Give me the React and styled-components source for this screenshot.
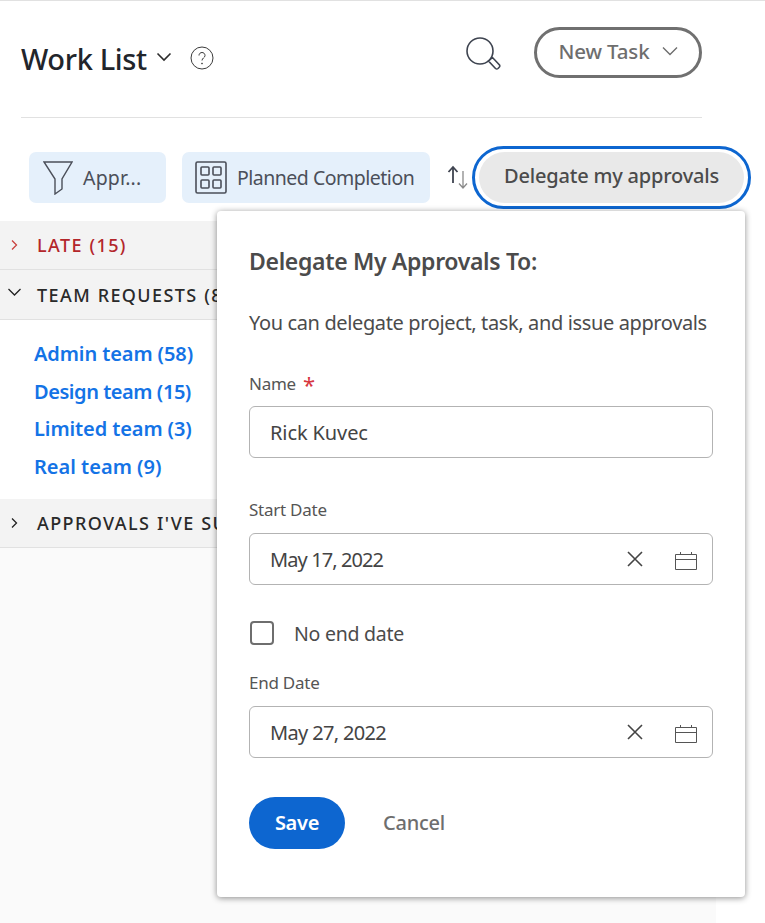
import React from "react";
import styled, { createGlobalStyle } from "styled-components";

const GlobalStyle = createGlobalStyle`
  html, body {
    margin: 0;
    padding: 0;
    background: #fff;
    font-family: "Noto Sans", "Open Sans", Arial, sans-serif;
  }
  * { box-sizing: border-box; }
`;

const Page = styled.div`
  position: relative;
  width: 765px;
  height: 923px;
  overflow: hidden;
  background: #fff;
  border-top: 1px solid #e1e1e1;
  display: flex;
  flex-direction: column;
`;

const Header = styled.header`
  height: 117px;
  margin: 0 63px 0 21px;
  border-bottom: 1px solid #e1e1e1;
  display: flex;
  align-items: flex-start;
  padding-top: 26px;
`;

const Title = styled.h1`
  margin: 13px 0 0;
  font-size: 29px;
  line-height: 38px;
  font-weight: 500;
  letter-spacing: -0.35px;
  color: #22252b;
`;

const TitleChevron = styled.svg`
  width: 16px;
  height: 10px;
  margin: 25px 0 0 9px;
  fill: none;
  stroke: #2c2c2c;
  stroke-width: 1.6;
`;

const HelpIcon = styled.svg`
  width: 24px;
  height: 24px;
  margin: 19px 0 0 18px;
  fill: none;
  stroke: #3c3c3c;
  stroke-width: 1;
`;

const SearchIcon = styled.svg`
  width: 36px;
  height: 36px;
  margin: 9px 0 0 auto;
  fill: none;
  stroke: #3e4450;
  stroke-width: 1.6;
`;

const NewTask = styled.button`
  width: 168px;
  height: 51px;
  margin-left: 33px;
  border: 3px solid #707070;
  border-radius: 26px;
  background: #fff;
  color: #6e6e6e;
  font: 500 20.5px "Noto Sans", sans-serif;
  letter-spacing: -0.15px;
  display: flex;
  align-items: center;
  justify-content: center;
  gap: 13px;
  padding: 0 0 4px 1px;
`;

const NewTaskChevron = styled.svg`
  width: 16px;
  height: 10px;
  fill: none;
  stroke: #6e6e6e;
  stroke-width: 1.4;
`;

const Toolbar = styled.div`
  height: 103px;
  padding: 34px 0 0 29px;
  display: flex;
  align-items: flex-start;
`;

const ToolChip = styled.div`
  height: 51px;
  width: ${(p) => p.$width}px;
  margin-right: ${(p) => p.$gap}px;
  flex: none;
  padding-left: ${(p) => p.$pad}px;
  border-radius: 7px;
  background: #e5f0fb;
  color: #4b4f59;
  font-size: 19.5px;
  letter-spacing: ${(p) => p.$spacing}px;
  display: flex;
  align-items: center;
  gap: 10px;
`;

const ChipIcon = styled.svg`
  flex: none;
  fill: none;
  stroke: #4b4f59;
`;

const SortIcon = styled.svg`
  flex: none;
  width: 24px;
  height: 26px;
  margin: 12px 3px 0 15px;
  fill: none;
  stroke-width: 1.3;
`;

const DelegateRing = styled.div`
  flex: none;
  width: 279px;
  height: 63px;
  margin-top: -6px;
  padding: 3px 4px;
  border: 3px solid #0d66d0;
  border-radius: 32px;
  background: #fff;
`;

const DelegateButton = styled.button`
  width: 100%;
  height: 100%;
  border: 0;
  border-radius: 27px;
  background: #e9e9e9;
  color: #4b4b4b;
  font: 500 20px "Noto Sans", sans-serif;
  letter-spacing: -0.2px;
  padding: 0 0 5px;
`;

const SectionRow = styled.div`
  width: 716px;
  height: ${(p) => p.$height}px;
  padding-left: 8px;
  background: #f3f3f3;
  border-bottom: 1px solid #e1e1e1;
  display: flex;
  align-items: center;
  color: ${(p) => p.$color};
  font-size: 18px;
  font-weight: 500;
  letter-spacing: 1.4px;
  word-spacing: 0.5px;
  white-space: pre;
`;

const RowChevron = styled.svg`
  flex: none;
  width: 29px;
  height: 14px;
  fill: none;
  stroke: ${(p) => p.$color};
  stroke-width: 1.3;
`;

const TeamList = styled.ul`
  width: 716px;
  height: 179px;
  margin: 0;
  padding: 15px 0 0 34px;
  list-style: none;
  background: #fff;
`;

const TeamLink = styled.li`
  height: 37.7px;
  line-height: 37px;
  color: #1473e6;
  font-size: 20px;
  font-weight: 600;
  letter-spacing: ${(p) => p.$spacing}px;
`;

const ListRest = styled.div`
  width: 716px;
  flex: 1;
  background: #fafafa;
`;

const Popover = styled.section`
  position: absolute;
  top: 210px;
  left: 217px;
  width: 528px;
  height: 686px;
  padding: 31px 32px 0;
  background: #fff;
  border-radius: 4px;
  box-shadow: 0 1px 6px rgba(0, 0, 0, 0.45);
  display: flex;
  flex-direction: column;
`;

const PopoverTitle = styled.h2`
  margin: 0;
  height: 38px;
  line-height: 38px;
  color: #4b4b4b;
  font-size: 23px;
  font-weight: 600;
  letter-spacing: -0.33px;
  white-space: nowrap;
`;

const Intro = styled.p`
  margin: 29px 0 0;
  height: 28px;
  line-height: 28px;
  color: #4b4b4b;
  font-size: 20px;
  letter-spacing: -0.37px;
  white-space: nowrap;
`;

const FieldLabel = styled.label`
  display: block;
  margin-top: ${(p) => p.$top}px;
  height: 24px;
  line-height: 24px;
  color: #555;
  font-size: 17px;
  letter-spacing: -0.25px;
`;

const Required = styled.span`
  color: #d7373f;
  margin-left: 7px;
  font-size: 22px;
  line-height: 20px;
  vertical-align: -3px;
`;

const InputBox = styled.div`
  margin-top: ${(p) => p.$top}px;
  height: 52px;
  width: 464px;
  padding: 0 14px 0 20px;
  border: 1px solid #b3b3b3;
  border-radius: 6px;
  display: flex;
  align-items: center;
  color: #444;
  font-size: 20px;
`;

const InputValue = styled.span`
  flex: 1;
  letter-spacing: ${(p) => p.$spacing}px;
`;

const ClearIcon = styled.svg`
  width: 18px;
  height: 18px;
  margin-right: 30px;
  fill: none;
  stroke: #444;
  stroke-width: 1.6;
`;

const CalendarIcon = styled.svg`
  width: 24px;
  height: 22px;
  margin-top: 3px;
  fill: none;
  stroke: #555;
  stroke-width: 1;
`;

const CheckRow = styled.div`
  margin-top: 35px;
  height: 26px;
  display: flex;
  align-items: center;
  gap: 20px;
  color: #4b4b4b;
  font-size: 19.5px;
  letter-spacing: -0.25px;
`;

const CheckBox = styled.span`
  width: 24px;
  height: 24px;
  margin-left: 1px;
  border: 2px solid #6e6e6e;
  border-radius: 4px;
  background: #fff;
`;

const Actions = styled.div`
  margin-top: 39px;
  display: flex;
  align-items: center;
  gap: 38px;
`;

const SaveButton = styled.button`
  width: 96px;
  height: 52px;
  border: 0;
  border-radius: 26px;
  background: #0d66d0;
  color: #fff;
  font: 600 20px "Noto Sans", sans-serif;
  letter-spacing: -0.3px;
  padding: 0 0 2px;
`;

const CancelButton = styled.button`
  border: 0;
  padding: 0 0 2px;
  background: none;
  color: #6e6e6e;
  font: 500 20px "Noto Sans", sans-serif;
  letter-spacing: -0.25px;
`;

const teams = [
  { name: "Admin team (58)", spacing: -0.1 },
  { name: "Design team (15)", spacing: -0.45 },
  { name: "Limited team (3)", spacing: -0.1 },
  { name: "Real team (9)", spacing: 0 },
];

const DateField = ({ value, spacing }) => (
  <InputBox $top={11}>
    <InputValue $spacing={spacing}>{value}</InputValue>
    <ClearIcon viewBox="0 0 18 18">
      <path d="M2 2l14 14M16 2L2 16" />
    </ClearIcon>
    <CalendarIcon viewBox="0 0 24 22">
      <path d="M1.5 4.5h21v15h-21zM1.5 9.5h21M6.5 2v2.5M17.5 2v2.5" />
    </CalendarIcon>
  </InputBox>
);

const App = () => {
  return (
    <Page>
      <GlobalStyle />
      <Header>
        <Title>Work List</Title>
        <TitleChevron viewBox="0 0 16 10">
          <path d="M1.5 1.5L8 8l6.5-6.5" />
        </TitleChevron>
        <HelpIcon viewBox="0 0 24 24">
          <circle cx="12" cy="12" r="11" />
          <path d="M9 9.5c0-4 6-4 6 0 0 2.400-3 2.500-3 5" />
          <circle cx="12" cy="17.500" r="0.5" />
        </HelpIcon>
        <SearchIcon viewBox="0 0 36 36">
          <circle cx="15" cy="15" r="13" />
          <path d="M23.500 25l4-3.500 7 7.500a2 2 0 0 1 -0.500 2.500l-1 1a2 2 0 0 1 -2.500 0z" />
        </SearchIcon>
        <NewTask>
          New Task
          <NewTaskChevron viewBox="0 0 16 10">
            <path d="M1 1.500L8 8.500l7-7" />
          </NewTaskChevron>
        </NewTask>
      </Header>

      <Toolbar>
        <ToolChip $width={137} $gap={16} $pad={14} $spacing={0.2}>
          <ChipIcon width="30" height="34" viewBox="0 0 30 34" strokeWidth="1.4">
            <path d="M1 1h28L19 18v10l-7 5V18z" />
          </ChipIcon>
          Appr...
        </ToolChip>
        <ToolChip $width={248} $gap={0} $pad={13} $spacing={-0.5}>
          <ChipIcon width="32" height="33" viewBox="0 0 32 33" strokeWidth="1.6">
            <rect x="1" y="1" width="30" height="31" rx="1.500" />
            <rect x="6" y="6" width="8" height="8" rx="1" />
            <rect x="18" y="6" width="8" height="8" rx="1" />
            <rect x="6" y="19" width="8" height="8" rx="1" />
            <rect x="18" y="19" width="8" height="8" rx="1" />
          </ChipIcon>
          Planned Completion
        </ToolChip>
        <SortIcon viewBox="0 0 24 26">
          <path d="M8 19V3M3.500 8L8 3l4.500 5" stroke="#3f4450" strokeWidth="1.8" />
          <path d="M18 7v17M14 19.500l4 4.500 4-4.500" stroke="#8a8a8a" />
        </SortIcon>
        <DelegateRing>
          <DelegateButton>Delegate my approvals</DelegateButton>
        </DelegateRing>
      </Toolbar>

      <SectionRow $height={49} $color="#b3262b">
        <RowChevron $color="#c9423f" viewBox="0 0 29 14">
          <path d="M4 2.500l4.500 4.500L4 11.500" />
        </RowChevron>
        LATE (15)
      </SectionRow>
      <SectionRow $height={50} $color="#2a2a2a">
        <RowChevron $color="#222" viewBox="0 0 29 14">
          <path d="M0.500 1l6 6 6-6" />
        </RowChevron>
        TEAM REQUESTS (8
      </SectionRow>
      <TeamList>
        {teams.map((t) => (
          <TeamLink key={t.name} $spacing={t.spacing}>
            {t.name}
          </TeamLink>
        ))}
      </TeamList>
      <SectionRow $height={49} $color="#2a2a2a">
        <RowChevron $color="#222" viewBox="0 0 29 14">
          <path d="M4 2.500l4.500 4.500L4 11.500" />
        </RowChevron>
        APPROVALS I'VE SU
      </SectionRow>
      <ListRest />

      <Popover>
        <PopoverTitle>Delegate My Approvals To:</PopoverTitle>
        <Intro>You can delegate project, task, and issue approvals</Intro>
        <FieldLabel $top={35}>
          Name<Required>*</Required>
        </FieldLabel>
        <InputBox $top={10}>
          <InputValue $spacing={-0.1}>Rick Kuvec</InputValue>
        </InputBox>
        <FieldLabel $top={40}>Start Date</FieldLabel>
        <DateField value="May 17, 2022" spacing={-0.9} />
        <CheckRow>
          <CheckBox />
          No end date
        </CheckRow>
        <FieldLabel $top={25}>End Date</FieldLabel>
        <DateField value="May 27, 2022" spacing={-0.65} />
        <Actions>
          <SaveButton>Save</SaveButton>
          <CancelButton>Cancel</CancelButton>
        </Actions>
      </Popover>
    </Page>
  );
};

export default App;
